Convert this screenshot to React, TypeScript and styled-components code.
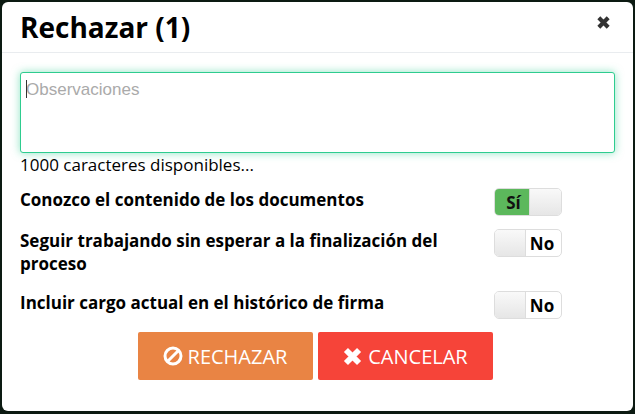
import styled, { createGlobalStyle } from "styled-components";

const GlobalStyle = createGlobalStyle`
  html, body {
    margin: 0;
    padding: 0;
    height: 414px;
    overflow: hidden;
    background: #0c1a12;
  }
  * {
    box-sizing: border-box;
  }
`;

const Page = styled.div`
  width: 635px;
  height: 414px;
  padding: 2px 2px 3px 2px;
  font-family: "Open Sans", "Noto Sans", sans-serif;
  color: #000;
`;

const Modal = styled.div`
  height: 100%;
  background: #fff;
  border-radius: 6px;
  display: flex;
  flex-direction: column;
`;

const Header = styled.header`
  height: 51px;
  flex: none;
  padding: 0 22px 0 18px;
  border-bottom: 1px solid #e9ecef;
  display: flex;
  align-items: center;
  justify-content: space-between;
`;

const Title = styled.h4`
  margin: 0;
  font-size: 28px;
  font-weight: 700;
  line-height: 34px;
`;

const Close = styled.button`
  border: 0;
  padding: 0;
  background: none;
  width: 15px;
  height: 15px;
  margin-bottom: 10px;
  color: #333;
  display: flex;
`;

const Body = styled.div`
  flex: 1;
  padding: 19px 18px 0;
  display: flex;
  flex-direction: column;
`;

const NotesBox = styled.div`
  position: relative;
  width: 595px;
  height: 81px;
`;

const Notes = styled.textarea`
  display: block;
  width: 100%;
  height: 100%;
  padding: 6px 5px;
  margin: 0;
  resize: none;
  outline: none;
  border: 1px solid #2ecc8f;
  border-radius: 3px;
  box-shadow: 0 0 8px rgba(46, 204, 143, 0.55);
  font-family: "Liberation Sans", Arial, sans-serif;
  font-size: 17px;
  line-height: 22px;
  caret-color: transparent;

  &::placeholder {
    color: #aaa;
    opacity: 1;
  }
`;

const Caret = styled.span`
  position: absolute;
  left: 6px;
  top: 8px;
  width: 1px;
  height: 18px;
  background: #333;
`;

const Counter = styled.div`
  font-size: 17px;
  line-height: 24px;
  margin-bottom: 11px;
`;

const OptionRow = styled.div<{ $height: number; $gap: number }>`
  height: ${(p) => p.$height}px;
  margin-bottom: ${(p) => p.$gap}px;
  display: flex;
  justify-content: space-between;
  align-items: flex-start;
`;

const OptionLabel = styled.label`
  width: 450px;
  font-size: 17px;
  font-weight: 700;
  line-height: 23px;
`;

const Switch = styled.div`
  width: 68px;
  height: 28px;
  margin-right: 53px;
  border: 1px solid #ddd;
  border-radius: 5px;
  overflow: hidden;
  display: flex;
  font-size: 17px;
  font-weight: 700;
`;

const SwitchOn = styled.span`
  width: 34px;
  padding-left: 3px;
  background: #5cb85c;
  display: flex;
  align-items: center;
  justify-content: center;
  color: #111;
`;

const SwitchOff = styled.span`
  width: 35px;
  padding-right: 3px;
  display: flex;
  align-items: center;
  justify-content: center;
  color: #000;
`;

const Handle = styled.span<{ $side: "left" | "right" }>`
  flex: 1;
  background: linear-gradient(#f9f9f9, #e6e6e6);
  border-${(p) => (p.$side === "left" ? "left" : "right")}: 1px solid #ddd;
`;

const Actions = styled.div`
  display: flex;
  justify-content: center;
  gap: 5px;
  padding-right: 5px;
`;

const Action = styled.button<{ $color: string; $width: number }>`
  width: ${(p) => p.$width}px;
  height: 48px;
  border: 0;
  border-radius: 2px;
  background: ${(p) => p.$color};
  color: #fff;
  font-family: "Open Sans", "Noto Sans", sans-serif;
  font-size: 20px;
  display: flex;
  align-items: center;
  justify-content: center;
  gap: 5px;
  padding: 0;
`;

const BanIcon = () => (
  <svg width="20" height="20" viewBox="0 0 20 20">
    <circle cx="10" cy="10" r="8" fill="none" stroke="currentColor" strokeWidth="3" />
    <path d="M4.5 15.5 15.5 4.5" stroke="currentColor" strokeWidth="3" />
  </svg>
);

const CrossIcon = ({ size }: { size: number }) => (
  <svg width={size} height={size} viewBox="0 0 16 16">
    <path d="M3 3 13 13M13 3 3 13" stroke="currentColor" strokeWidth="4.4" />
  </svg>
);

export default function App() {
  return (
    <Page>
      <GlobalStyle />
      <Modal>
        <Header>
          <Title>Rechazar (1)</Title>
          <Close aria-label="Cerrar">
            <CrossIcon size={15} />
          </Close>
        </Header>
        <Body>
          <NotesBox>
            <Notes placeholder="Observaciones" />
            <Caret />
          </NotesBox>
          <Counter>1000 caracteres disponibles...</Counter>
          <OptionRow $height={28} $gap={13}>
            <OptionLabel>Conozco el contenido de los documentos</OptionLabel>
            <Switch>
              <SwitchOn>Sí</SwitchOn>
              <Handle $side="left" />
            </Switch>
          </OptionRow>
          <OptionRow $height={48} $gap={14}>
            <OptionLabel>Seguir trabajando sin esperar a la finalización del proceso</OptionLabel>
            <Switch>
              <Handle $side="right" />
              <SwitchOff>No</SwitchOff>
            </Switch>
          </OptionRow>
          <OptionRow $height={28} $gap={13}>
            <OptionLabel>Incluir cargo actual en el histórico de firma</OptionLabel>
            <Switch>
              <Handle $side="right" />
              <SwitchOff>No</SwitchOff>
            </Switch>
          </OptionRow>
          <Actions>
            <Action $color="#e98444" $width={175}>
              <BanIcon />
              RECHAZAR
            </Action>
            <Action $color="#f64439" $width={175}>
              <CrossIcon size={21} />
              CANCELAR
            </Action>
          </Actions>
        </Body>
      </Modal>
    </Page>
  );
}
